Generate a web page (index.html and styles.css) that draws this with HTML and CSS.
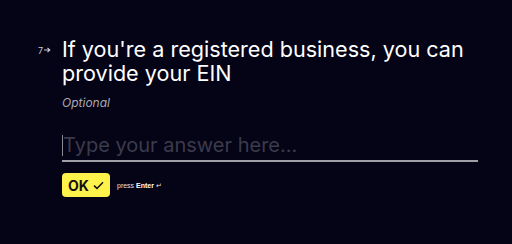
FILE: index.html
```html
<!DOCTYPE html>
<html>
<head>
<meta charset="utf-8">
<link rel="stylesheet" href="styles.css">
</head>
<body>
<main class="question">
  <div class="num">7<svg class="arrow" width="7" height="6" viewBox="0 0 7 6"><path d="M0 3H5.5M3.5 1L5.8 3L3.5 5" stroke="#c8c8d0" stroke-width="1.1" fill="none"/></svg></div>
  <div class="content">
    <h1 class="title">If you're a registered business, you can provide your EIN</h1>
    <p class="hint">Optional</p>
    <div class="field">
      <span class="caret"></span>
      <span class="placeholder">Type your answer here...</span>
    </div>
    <div class="actions">
      <button class="ok">OK <svg width="11" height="9" viewBox="0 0 11 9"><path d="M1 4.6L4 7.4L10 1.2" stroke="#111" stroke-width="1.5" fill="none"/></svg></button>
      <span class="press">press <b>Enter</b> ↵</span>
    </div>
  </div>
</main>
</body>
</html>
```
FILE: styles.css
```css
html, body {
  margin: 0;
  padding: 0;
  background: #050316;
  font-family: Inter, "Noto Sans", sans-serif;
  color: #fff;
}
.question {
  display: flex;
  padding: 37px 0 0 38px;
}
.num {
  width: 24px;
  font-size: 9px;
  color: #c8c8d0;
  display: flex;
  align-items: center;
  gap: 1px;
  height: 20px;
  margin-top: 3px;
}
.arrow { display: block; }
.content {
  width: 416px;
}
.title {
  margin: 0;
  font-size: 21.6px;
  font-weight: 400;
  line-height: 24px;
  letter-spacing: 0;
}
.hint {
  margin: 10px 0 0;
  font-size: 12px;
  line-height: 15px;
  font-style: italic;
  color: #a9a9b3;
}
.field {
  margin-top: 23px;
  height: 24px;
  border-bottom: 2px solid #a0a0a6;
  display: flex;
  align-items: center;
  padding-bottom: 3px;
}
.caret {
  width: 1px;
  height: 21px;
  background: #8a8a92;
}
.placeholder {
  font-size: 20px;
  color: #3b3b4c;
  line-height: 24px;
}
.actions {
  margin-top: 11px;
  display: flex;
  align-items: center;
  gap: 7px;
}
.ok {
  width: 48px;
  height: 24px;
  border: none;
  border-radius: 4px;
  background: #fff24a;
  color: #111;
  font-family: Inter, sans-serif;
  font-weight: 700;
  font-size: 14px;
  display: flex;
  align-items: center;
  justify-content: center;
  gap: 4px;
  padding: 0;
}
.press {
  font-size: 7px;
  color: #e0e0e6;
  font-family: "Liberation Sans", Arial, sans-serif;
  margin-top: 2px;
}
.press b { font-weight: 700; color: #fff; }
```
